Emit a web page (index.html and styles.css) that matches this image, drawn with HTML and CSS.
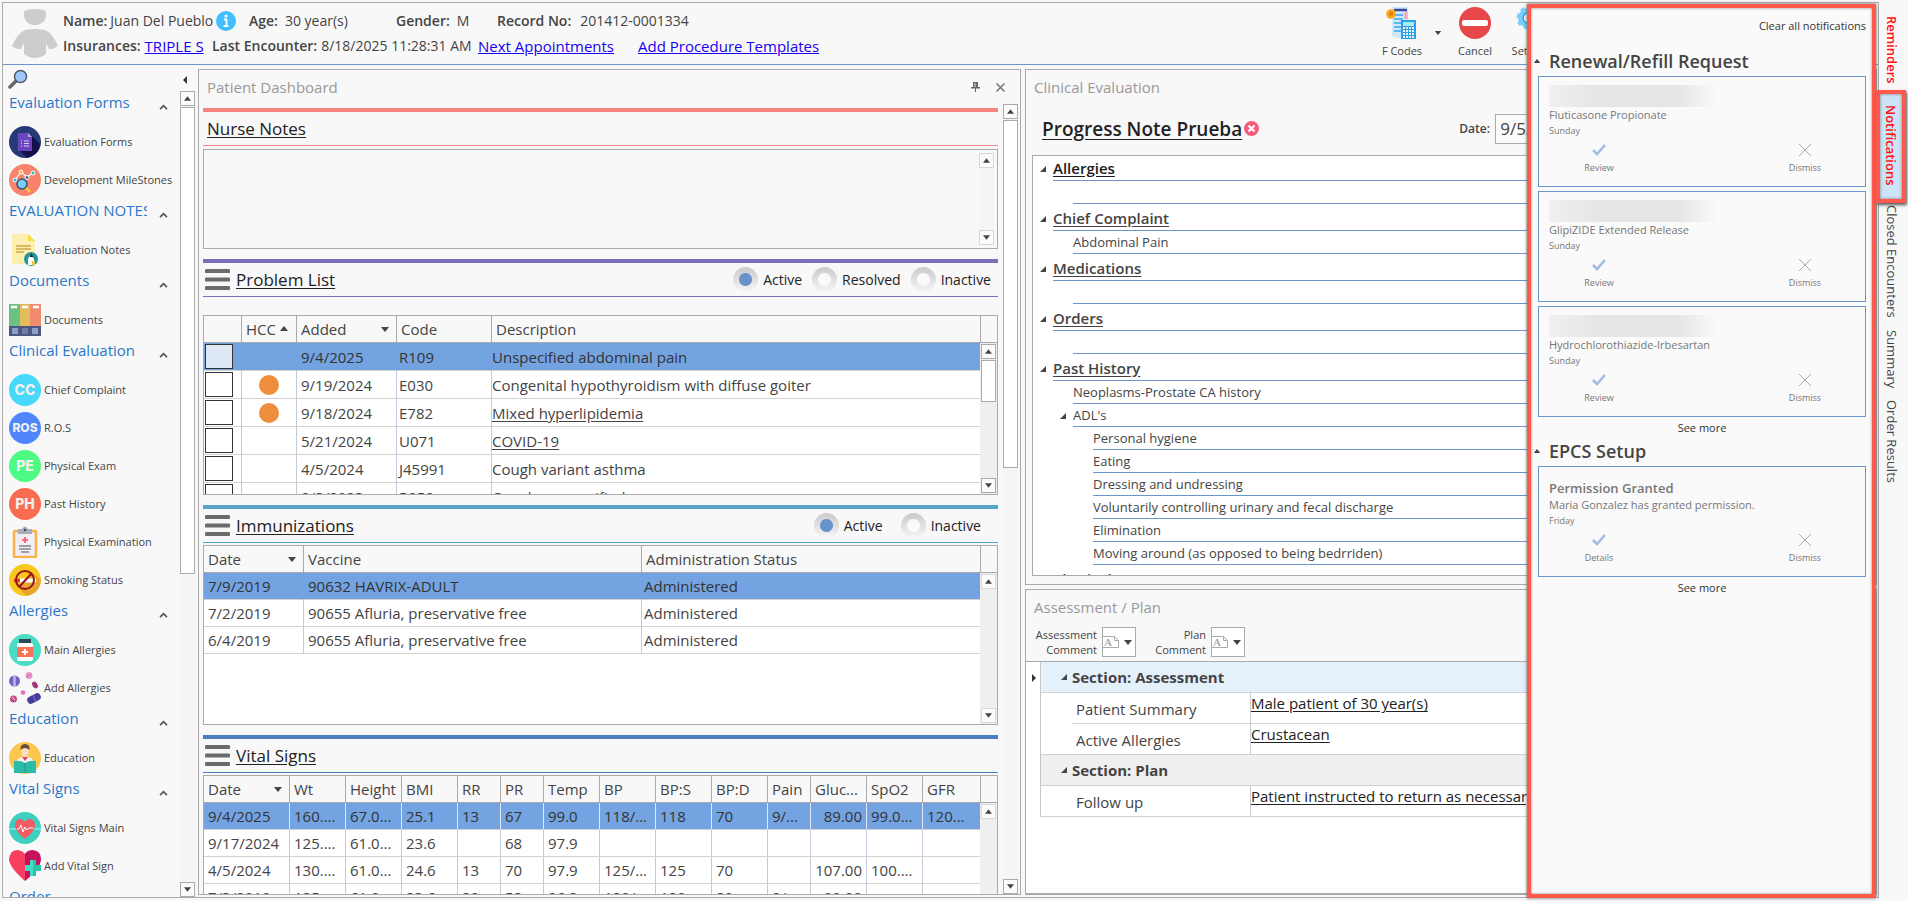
FILE: index.html
```html
<!DOCTYPE html>
<html lang="en">
<head>
<meta charset="utf-8">
<title>Patient Dashboard</title>
<link rel="stylesheet" href="styles.css">
</head>
<body>
<svg class="defs" aria-hidden="true">
  <symbol id="up" viewBox="0 0 8 5"><path d="M0 5L4 0L8 5Z" fill="#444"/></symbol>
  <symbol id="down" viewBox="0 0 8 5"><path d="M0 0L4 5L8 0Z" fill="#444"/></symbol>
  <symbol id="chev" viewBox="0 0 10 7"><path d="M1 6L5 2L9 6" fill="none" stroke="#555" stroke-width="2"/></symbol>
  <symbol id="tri" viewBox="0 0 6 6"><path d="M6 0V6H0Z" fill="#444"/></symbol>
  <symbol id="check" viewBox="0 0 14 12"><path d="M1 6L5 10L13 1" fill="none" stroke="#a3bde0" stroke-width="2.6"/></symbol>
  <symbol id="cross" viewBox="0 0 12 12"><path d="M0 0L12 12M12 0L0 12" fill="none" stroke="#aaa" stroke-width="1"/></symbol>
  <symbol id="burger" viewBox="0 0 25 21"><path d="M1.5 2H23.500M1.500 10.500H23.500M1.500 19H23.500" stroke="#6b6b6b" stroke-width="4" stroke-linecap="round"/></symbol>
  <symbol id="adoc" viewBox="0 0 17 13"><path d="M0 .5H11.500L15.500 4.500V11.500H0" fill="none" stroke="#aaa"/><path d="M11.500 .5V4.500H15.500" fill="none" stroke="#aaa"/><text x="1" y="10" class="serif">A</text></symbol>
</svg>
<div class="app">
  <div class="window">
    <header class="top">
      <svg class="avatar" viewBox="0 0 46 52"><path d="M12 5C12 1 34 1 34 5C35 12 31 18 23 18S11 12 12 5Z" fill="#cdcdcd"/><path d="M13 23Q23 21 33 23Q41 27 46 39Q42 43 37 42L34 36V47Q29 51 23 51T12 47V36L9 42Q4 43 0 39Q5 27 13 23Z" fill="#cdcdcd"/></svg>
      <div class="patient">
        <div class="prow">
          <span class="fld f-name"><b>Name:</b><span>Juan Del Pueblo</span>
            <svg class="info" viewBox="0 0 20 20"><circle cx="10" cy="10" r="10" fill="#3fbffc"/><circle cx="10" cy="5" r="1.600" fill="#fff"/><path d="M8 8.500H10.500V15M7.500 15H12.500" fill="none" stroke="#fff" stroke-width="1.800"/></svg></span>
          <span class="fld f-age"><b>Age:</b><span>30 year(s)</span></span>
          <span class="fld f-gender"><b>Gender:</b><span>M</span></span>
          <span class="fld f-rec"><b>Record No:</b><span>201412-0001334</span></span>
        </div>
        <div class="prow">
          <span class="fld f-ins"><b>Insurances:</b><a href="#">TRIPLE S</a></span>
          <span class="fld f-enc"><b>Last Encounter:</b><span>8/18/2025 11:28:31 AM</span></span>
          <a class="f-next" href="#">Next Appointments</a>
          <a href="#">Add Procedure Templates</a>
        </div>
      </div>
      <div class="tools">
        <button class="tool"><svg viewBox="0 0 32 32"><path d="M6 0H22V30Q14 33 6 29Z" fill="#cfe6fb"/><path d="M8 3H21" stroke="#3c4a9a" stroke-width="2.500"/><path d="M8 8H17M8 12H17M8 16H15M8 20H15M8 24H15" stroke="#5bb6f5" stroke-width="1.800"/><path d="M20 5V12" stroke="#f4a3b8" stroke-width="3"/><circle cx="5" cy="7" r="4.800" fill="#fba919"/><circle cx="5" cy="7" r="2.400" fill="#e8820c"/><rect x="15" y="13" width="15" height="19" fill="#2e9fe6"/><rect x="17" y="15" width="11" height="4" fill="#a6ecf0"/><path d="M17 21H28M17 24H28M17 27H28M17 30H28" stroke="#e7f6ff" stroke-width="2" stroke-dasharray="2 1"/></svg>F Codes</button>
        <button class="drop" aria-label="More F codes"><svg width="8" height="4"><use href="#down"/></svg></button>
        <button class="tool t-cancel"><svg viewBox="0 0 32 32"><circle cx="16" cy="16" r="16" fill="#e8474a"/><rect x="3" y="13" width="26" height="6" rx="2" fill="#fff"/></svg>Cancel</button>
        <button class="tool"><svg viewBox="0 0 32 32"><circle cx="12" cy="11" r="7.500" fill="none" stroke="#76d0fb" stroke-width="5"/><circle cx="12" cy="11" r="10" fill="none" stroke="#76d0fb" stroke-width="3" stroke-dasharray="4 3.850"/><circle cx="12" cy="11" r="5" fill="none" stroke="#3b9fe6" stroke-width="1.500"/></svg>Settings</button>
      </div>
    </header>
    <div class="work">
      <nav class="nav">
        <div class="nav-top">
          <svg width="20" height="20" viewBox="0 0 20 20"><path d="M2 18L8 12" stroke="#666" stroke-width="3.500" stroke-linecap="round"/><circle cx="12.500" cy="7.500" r="6" fill="#9dc8fb" stroke="#4d5866" stroke-width="1.500"/></svg>
          <button class="bare" aria-label="Collapse"><svg width="4" height="8"><path d="M4 0V8L0 4Z" fill="#333"/></svg></button>
        </div>
        <div class="nav-body">
          <div class="nav-list">
            <h2><span>Evaluation Forms</span><svg><use href="#chev"/></svg></h2>
            <a href="#"><svg viewBox="0 0 32 32"><circle cx="16" cy="16" r="16" fill="#263a78"/><path d="M22 9L31 18Q30 29 18 32L10 24Z" fill="#150f4a"/><path d="M9 7H19L23 11V25H9Z" fill="#6a45c0"/><path d="M19 7V11H23Z" fill="#b9a2e8"/><path d="M12 15H13M15 15H20M12 17.500H13M15 17.500H20M12 20H13M15 20H20" stroke="#d8ccf2"/></svg>Evaluation Forms</a>
            <a href="#"><svg viewBox="0 0 32 32"><circle cx="16" cy="16" r="16" fill="#f9826c"/><path d="M6 16L12 8L18 13L24 9" fill="none" stroke="#fff" stroke-width="1.200"/><g stroke="#fff"><circle cx="6" cy="16" r="2" fill="#29b6c8"/><circle cx="12" cy="8" r="2" fill="#f5b62b"/><circle cx="18" cy="13.500" r="2" fill="#2b7a8c"/><circle cx="24" cy="9" r="2" fill="#1fc0b0"/></g><path d="M16 23L21 28" stroke="#f8c33b" stroke-width="2.500"/><circle cx="13" cy="20" r="5" fill="#79cdf9" stroke="#3e5266" stroke-width="1.500"/></svg>Development MileStones</a>
            <h2><span>EVALUATION NOTES</span><svg><use href="#chev"/></svg></h2>
            <a href="#"><svg viewBox="0 0 32 32"><path d="M3 0H19L26 7V30H3Z" fill="#fcefb0"/><path d="M19 0L26 7H19Z" fill="#fbdc3c"/><path d="M7 12H22M7 15H22M7 18H15" stroke="#c8a84a" stroke-width="1.300"/><circle cx="22" cy="25" r="7" fill="#1e9aa0"/><path d="M19 31V25L22 20L25 25V31Z" fill="#fff"/><path d="M21 22L22 19L24 22V23H21Z" fill="#222"/><path d="M23 27H26V31H23Z" fill="#f5c640"/></svg>Evaluation Notes</a>
            <h2><span>Documents</span><svg><use href="#chev"/></svg></h2>
            <a href="#"><svg viewBox="0 0 32 32"><path d="M0 0H11V22H0Z" fill="#6cc082"/><path d="M11 0H21V22H11Z" fill="#e2bb5a"/><path d="M21 0H32V22H21Z" fill="#f18b6e"/><path d="M0 22H32V32H0Z" fill="#4d567c"/><path d="M2 3H8M13 3H19M24 3H30" stroke="#fff" stroke-width="2.500"/><path d="M3 24H9V30H3ZM23 24H29V30H23Z" fill="#8f9dca"/><path d="M13 24H19V30H13Z" fill="#6f7ba3"/></svg>Documents</a>
            <h2><span>Clinical Evaluation</span><svg><use href="#chev"/></svg></h2>
            <a href="#"><i class="disc cc">CC</i>Chief Complaint</a>
            <a href="#"><i class="disc ros">ROS</i>R.O.S</a>
            <a href="#"><i class="disc pe">PE</i>Physical Exam</a>
            <a href="#"><i class="disc ph">PH</i>Past History</a>
            <a href="#"><svg viewBox="0 0 32 32"><rect x="5" y="5" width="22" height="26" rx="1" fill="#eeeef4" stroke="#fbb14a" stroke-width="2.500"/><path d="M9 3H13Q16-2 19 3H23V8H9Z" fill="#a9afb8"/><circle cx="16" cy="4" r="1.300" fill="#445"/><path d="M16 11V17M13 14H19" stroke="#f26d74" stroke-width="2.200"/><path d="M10 20H22M10 23H22M12 26H20" stroke="#555" stroke-width="1.200"/></svg>Physical Examination</a>
            <a href="#"><svg viewBox="0 0 32 32"><circle cx="16" cy="16" r="16" fill="#f8c91c"/><path d="M24 9L32 16Q31 29 17 32L10 24Z" fill="#e9a62e"/><path d="M5 16.500H27" stroke="#fff" stroke-width="4"/><path d="M5 16.500H11" stroke="#e8421c" stroke-width="4"/><circle cx="16" cy="16" r="9" fill="none" stroke="#98131a" stroke-width="2"/><path d="M10 23L23 9" stroke="#98131a" stroke-width="2"/></svg>Smoking Status</a>
            <h2><span>Allergies</span><svg><use href="#chev"/></svg></h2>
            <a href="#"><svg viewBox="0 0 32 32"><circle cx="16" cy="16" r="16" fill="#4bdcc4"/><rect x="10" y="5" width="12" height="4" fill="#2f4656"/><rect x="8" y="9" width="16" height="18" rx="2" fill="#fff"/><rect x="8" y="13" width="16" height="10" fill="#f8735a"/><path d="M16 15V21M13 18H19" stroke="#fff" stroke-width="1.800"/></svg>Main Allergies</a>
            <a href="#"><svg viewBox="0 0 32 32"><circle cx="5.500" cy="9" r="5.500" fill="#6f66c4"/><path d="M5.500 4V14" stroke="#b9b6ee" stroke-width="2.500"/><circle cx="20" cy="3.500" r="3.500" fill="#e695c6"/><path d="M18 5L22 2" stroke="#c766a0"/><ellipse cx="26" cy="13" rx="2.400" ry="3.600" transform="rotate(-35 26 13)" fill="#a5337c"/><circle cx="14" cy="20.500" r="2.300" fill="#e86cba"/><circle cx="4.500" cy="27" r="3.500" fill="#c94c8e"/><path d="M3 25L6 28" stroke="#fff" stroke-width=".8"/><path d="M22 28L28 25" stroke="#463d9b" stroke-width="7.500" stroke-linecap="round"/><path d="M24 23L27 30" stroke="#7e76ce"/></svg>Add Allergies</a>
            <h2><span>Education</span><svg><use href="#chev"/></svg></h2>
            <a href="#"><svg viewBox="0 0 32 32"><circle cx="16" cy="16" r="16" fill="#fbc64c"/><path d="M7 20Q9 15 16 14Q23 15 25 20V26H7Z" fill="#f4f2ee"/><path d="M13 15L16 19L19 15Z" fill="#e5464b"/><ellipse cx="16" cy="9" rx="4" ry="5.500" fill="#fbdcbc"/><path d="M11.500 8Q11 2 16 2T20.500 8Q16 4 11.500 8Z" fill="#6b4a3c"/><path d="M5 19Q11 18 16 21Q21 18 27 19V31H5Z" fill="#2cbba8"/><path d="M16 21V31" stroke="#1e9a8c"/></svg>Education</a>
            <h2><span>Vital Signs</span><svg><use href="#chev"/></svg></h2>
            <a href="#"><svg viewBox="0 0 32 32"><circle cx="16" cy="16" r="16" fill="#3fcfc0"/><path d="M0 17H32" stroke="#b6f0e8"/><path d="M16 27Q5 18 6 12Q7 7 12 7Q15 7.500 16 10Q17 7.500 20 7Q25 7 26 12Q27 18 16 27Z" fill="#f45b62"/><path d="M8 17H10L12 13L14 20L16 15L18 18L20 16H24" fill="none" stroke="#fff"/></svg>Vital Signs Main</a>
            <a href="#"><svg viewBox="0 0 32 32"><path d="M16 31Q0 17 0 9Q1 0 9 0Q14 1 16 4Z" fill="#f83f5f"/><path d="M16 4Q18 0 24 0Q32 1 32 9Q32 18 16 31Z" fill="#c4125f"/><path d="M21 10H27V15H32V21H27V26H21V21H16V15H21Z" fill="#45dcc0"/><path d="M24 10H27V15H32V21H27V26H24Z" fill="#2cc4a8"/></svg>Add Vital Sign</a>
            <h2><span>Order</span><svg><use href="#chev"/></svg></h2>
          </div>
          <div class="scroll dark"><button aria-label="Up"><svg><use href="#up"/></svg></button><div class="thumb t-nav"></div><button class="end" aria-label="Down"><svg><use href="#down"/></svg></button></div>
        </div>
      </nav>

      <main class="panel dash">
        <div class="ptitle"><span>Patient Dashboard</span>
          <button class="bare" aria-label="Pin"><svg width="9" height="10" viewBox="0 0 9 10"><path d="M2 0H7V5H9V6.500H5V10H4V6.500H0V5H2Z" fill="#666"/><path d="M4 1V5" stroke="#ddd"/></svg></button>
          <button class="bare" aria-label="Close"><svg width="9" height="9" viewBox="0 0 9 9"><path d="M.5 .5L8.500 8.500M8.500 .5L.5 8.500" stroke="#777" stroke-width="1.500"/></svg></button>
        </div>
        <div class="dash-body">
          <div class="sections">
            <section class="sec red">
              <div class="sec-head"><h3><label for="nurse">Nurse Notes</label></h3></div>
              <div class="notes"><textarea id="nurse"></textarea>
                <div class="scroll light"><button aria-label="Up"><svg><use href="#up"/></svg></button><button class="end" aria-label="Down"><svg><use href="#down"/></svg></button></div></div>
            </section>
            <section class="sec purple">
              <div class="sec-head"><svg class="burger"><use href="#burger"/></svg><h3>Problem List</h3>
                <div class="radios">
                  <label><input type="radio" name="prob" checked>Active</label>
                  <label><input type="radio" name="prob">Resolved</label>
                  <label><input type="radio" name="prob">Inactive</label>
                </div></div>
              <div class="gridbox problems">
                <table>
                  <colgroup><col class="w38"><col class="w55"><col class="w100"><col class="w95"><col></colgroup>
                  <thead><tr><th></th><th>HCC<svg class="sort s-in"><use href="#up"/></svg></th><th>Added<svg class="sort"><use href="#down"/></svg></th><th>Code</th><th>Description</th></tr></thead>
                  <tbody>
                    <tr class="sel"><td><input type="checkbox" aria-label="R109"></td><td></td><td>9/4/2025</td><td>R109</td><td>Unspecified abdominal pain</td></tr>
                    <tr><td><input type="checkbox" aria-label="E030"></td><td><i class="dot"></i></td><td>9/19/2024</td><td>E030</td><td>Congenital hypothyroidism with diffuse goiter</td></tr>
                    <tr><td><input type="checkbox" aria-label="E782"></td><td><i class="dot"></i></td><td>9/18/2024</td><td>E782</td><td><u>Mixed hyperlipidemia</u></td></tr>
                    <tr><td><input type="checkbox" aria-label="U071"></td><td></td><td>5/21/2024</td><td>U071</td><td><u>COVID-19</u></td></tr>
                    <tr><td><input type="checkbox" aria-label="J45991"></td><td></td><td>4/5/2024</td><td>J45991</td><td>Cough variant asthma</td></tr>
                    <tr><td><input type="checkbox" aria-label="R059"></td><td></td><td>9/8/2023</td><td>R059</td><td>Cough, unspecified</td></tr>
                  </tbody>
                </table>
                <div class="side"><div class="cap"></div><div class="scroll dark"><button aria-label="Up"><svg><use href="#up"/></svg></button><div class="thumb t-prob"></div><button class="end" aria-label="Down"><svg><use href="#down"/></svg></button></div></div>
              </div>
            </section>
            <section class="sec teal">
              <div class="sec-head"><svg class="burger"><use href="#burger"/></svg><h3>Immunizations</h3>
                <div class="radios wide">
                  <label><input type="radio" name="imm" checked>Active</label>
                  <label><input type="radio" name="imm">Inactive</label>
                </div></div>
              <div class="gridbox immun">
                <table>
                  <colgroup><col class="w100"><col class="half"><col class="half"></colgroup>
                  <thead><tr><th>Date<svg class="sort"><use href="#down"/></svg></th><th>Vaccine</th><th>Administration Status</th></tr></thead>
                  <tbody>
                    <tr class="sel"><td>7/9/2019</td><td>90632 HAVRIX-ADULT</td><td>Administered</td></tr>
                    <tr><td>7/2/2019</td><td>90655 Afluria, preservative free</td><td>Administered</td></tr>
                    <tr><td>6/4/2019</td><td>90655 Afluria, preservative free</td><td>Administered</td></tr>
                  </tbody>
                </table>
                <div class="side"><div class="cap"></div><div class="scroll light"><button aria-label="Up"><svg><use href="#up"/></svg></button><button class="end" aria-label="Down"><svg><use href="#down"/></svg></button></div></div>
              </div>
            </section>
            <section class="sec blue">
              <div class="sec-head"><svg class="burger"><use href="#burger"/></svg><h3>Vital Signs</h3></div>
              <div class="gridbox vitals">
                <table>
                  <colgroup><col class="w86"><col class="w56"><col class="w56"><col class="w56"><col class="w43"><col class="w43"><col class="w56"><col class="w56"><col class="w56"><col class="w56"><col class="w43"><col class="w56"><col class="w56"><col></colgroup>
                  <thead><tr><th>Date<svg class="sort"><use href="#down"/></svg></th><th>Wt</th><th>Height</th><th>BMI</th><th>RR</th><th>PR</th><th>Temp</th><th>BP</th><th>BP:S</th><th>BP:D</th><th>Pain</th><th>Gluc...</th><th>SpO2</th><th>GFR</th></tr></thead>
                  <tbody>
                    <tr class="sel"><td>9/4/2025</td><td>160....</td><td>67.0...</td><td>25.1</td><td>13</td><td>67</td><td>99.0</td><td>118/...</td><td>118</td><td>70</td><td>9/...</td><td class="num">89.00</td><td>99.0...</td><td>120...</td></tr>
                    <tr><td>9/17/2024</td><td>125....</td><td>61.0...</td><td>23.6</td><td></td><td>68</td><td>97.9</td><td></td><td></td><td></td><td></td><td></td><td></td><td></td></tr>
                    <tr><td>4/5/2024</td><td>130....</td><td>61.0...</td><td>24.6</td><td>13</td><td>70</td><td>97.9</td><td>125/...</td><td>125</td><td>70</td><td></td><td class="num">107.00</td><td>100....</td><td></td></tr>
                    <tr><td>7/3/2019</td><td>125....</td><td>61.0...</td><td>23.6</td><td>20</td><td>58</td><td>96.2</td><td>120/...</td><td>120</td><td>80</td><td>0/...</td><td class="num">90.00</td><td></td><td></td></tr>
                  </tbody>
                </table>
                <div class="side"><div class="cap"></div><div class="scroll light"><button aria-label="Up"><svg><use href="#up"/></svg></button></div></div>
              </div>
            </section>
          </div>
          <div class="scroll dark outer"><button aria-label="Up"><svg><use href="#up"/></svg></button><div class="thumb t-dash"></div><button class="end" aria-label="Down"><svg><use href="#down"/></svg></button></div>
        </div>
      </main>

      <div class="right">
        <section class="panel clin">
          <div class="ptitle"><span>Clinical Evaluation</span></div>
          <div class="note-head">
            <h1>Progress Note Prueba</h1>
            <svg width="15" height="15" viewBox="0 0 15 15"><circle cx="7.500" cy="7.500" r="7.500" fill="#f65c78"/><path d="M4.500 4.500L10.500 10.500M10.500 4.500L4.500 10.500" stroke="#fff" stroke-width="2.200"/></svg>
            <label for="date">Date:</label><input id="date" type="text" value="9/5/2025">
          </div>
          <div class="tree">
            <div class="grp"><h4 class="ink"><svg><use href="#tri"/></svg><span>Allergies</span></h4><p></p></div>
            <div class="grp"><h4><svg><use href="#tri"/></svg><span>Chief Complaint</span></h4><p>Abdominal Pain</p></div>
            <div class="grp"><h4><svg><use href="#tri"/></svg><span>Medications</span></h4><p></p></div>
            <div class="grp"><h4><svg><use href="#tri"/></svg><span>Orders</span></h4><p></p></div>
            <div class="grp"><h4><svg><use href="#tri"/></svg><span>Past History</span></h4>
              <p>Neoplasms-Prostate CA history</p>
              <p class="open"><svg><use href="#tri"/></svg>ADL's</p>
              <p class="deep">Personal hygiene</p><p class="deep">Eating</p><p class="deep">Dressing and undressing</p><p class="deep">Voluntarily controlling urinary and fecal discharge</p><p class="deep">Elimination</p><p class="deep">Moving around (as opposed to being bedrriden)</p></div>
            <div class="grp"><h4><svg class="off"></svg><span>Physical Exam</span></h4></div>
          </div>
        </section>
        <section class="panel plan">
          <div class="ptitle"><span>Assessment / Plan</span></div>
          <div class="plan-tools">
            <span>Assessment<br>Comment</span><button aria-label="Assessment comment"><svg width="17" height="13"><use href="#adoc"/></svg><svg width="8" height="5"><use href="#down"/></svg></button>
            <span class="second">Plan<br>Comment</span><button aria-label="Plan comment"><svg width="17" height="13"><use href="#adoc"/></svg><svg width="8" height="5"><use href="#down"/></svg></button>
          </div>
          <table class="plan-grid">
            <colgroup><col class="w15"><col class="w31"><col class="w179"><col></colgroup>
            <tr class="sect on"><td><svg width="4" height="8"><path d="M0 0L4 4L0 8Z" fill="#333"/></svg></td><th colspan="3"><svg class="t"><use href="#tri"/></svg>Section: Assessment</th></tr>
            <tr><td></td><td class="ind"></td><td class="lab">Patient Summary</td><td class="val"><u>Male patient of 30 year(s)</u></td></tr>
            <tr><td></td><td class="ind last"></td><td class="lab">Active Allergies</td><td class="val"><u>Crustacean</u></td></tr>
            <tr class="sect"><td></td><th colspan="3"><svg class="t"><use href="#tri"/></svg>Section: Plan</th></tr>
            <tr><td></td><td class="ind last"></td><td class="lab">Follow up</td><td class="val"><u>Patient instructed to return as necessary</u></td></tr>
          </table>
        </section>
      </div>
    </div>
    <aside class="notif">
      <button class="clear">Clear all notifications</button>
      <h2><svg><use href="#up"/></svg>Renewal/Refill Request</h2>
      <article><div class="smudge"></div><p>Fluticasone Propionate</p><small>Sunday</small><div class="acts"><button><svg width="14" height="12"><use href="#check"/></svg>Review</button><button><svg width="12" height="12"><use href="#cross"/></svg>Dismiss</button></div></article>
      <article><div class="smudge"></div><p>GlipiZIDE Extended Release</p><small>Sunday</small><div class="acts"><button><svg width="14" height="12"><use href="#check"/></svg>Review</button><button><svg width="12" height="12"><use href="#cross"/></svg>Dismiss</button></div></article>
      <article><div class="smudge"></div><p>Hydrochlorothiazide-Irbesartan</p><small>Sunday</small><div class="acts"><button><svg width="14" height="12"><use href="#check"/></svg>Review</button><button><svg width="12" height="12"><use href="#cross"/></svg>Dismiss</button></div></article>
      <button class="more">See more</button>
      <h2><svg><use href="#up"/></svg>EPCS Setup</h2>
      <article><h3>Permission Granted</h3><p>Maria Gonzalez has granted permission.</p><small>Friday</small><div class="acts"><button><svg width="14" height="12"><use href="#check"/></svg>Details</button><button><svg width="12" height="12"><use href="#cross"/></svg>Dismiss</button></div></article>
      <button class="more">See more</button>
    </aside>
  </div>
  <div class="tabs">
    <button class="hot">Reminders</button>
    <button class="hot cur">Notifications</button>
    <button>Closed Encounters</button>
    <button>Summary</button>
    <button>Order Results</button>
  </div>
</div>
</body>
</html>
```
FILE: styles.css
```css
* { box-sizing: border-box; }
body { margin: 0; background: #f8f8f8; color: #444; font: 15px/20px "Open Sans", "Noto Sans", sans-serif; overflow: hidden; }
h1, h2, h3, h4, p { margin: 0; font-weight: 400; font-size: inherit; }
button, input, textarea { font: inherit; color: inherit; margin: 0; padding: 0; }
button { background: none; border: 0; }
svg { display: block; flex: none; }
.defs { position: absolute; width: 0; height: 0; }
.serif { font: bold 11px "Liberation Serif", serif; fill: #aaa; }
b { font-weight: 600; }

.app { display: flex; height: 100vh; padding: 2px 0 3px 2px; }
.window { position: relative; flex: 1; min-width: 0; display: flex; flex-direction: column; border: 1px solid #ababab; }

.top { display: flex; height: 62px; flex: none; border-bottom: 1px solid #6b96cb; padding: 4px 0 0 9px; }
.avatar { width: 46px; height: 52px; margin-right: 5px; }
.patient { display: flex; flex-direction: column; gap: 5px; padding-top: 4px; }
.prow { display: flex; white-space: nowrap; }
.prow a { color: #1a00f0; font-size: 15px; }
.fld { display: flex; gap: 4px; font-size: 14px; }
.fld .info { width: 20px; height: 20px; }
.f-name { width: 186px; gap: 3px; }
.f-age { width: 147px; gap: 7px; }
.f-gender { width: 101px; gap: 7px; }
.f-rec { gap: 9px; }
.f-ins { width: 149px; }
.f-enc { width: 266px; }
.f-next { width: 160px; }
.tools { display: flex; margin-left: auto; padding-right: 322px; font-size: 11px; line-height: 15px; }
.tool { display: flex; flex-direction: column; align-items: center; gap: 4px; width: 48px; }
.tool svg { width: 32px; height: 32px; }
.drop { width: 25px; padding: 24px 8px 0; display: flex; align-items: flex-start; }
.t-cancel { margin-right: 9px; }

.work { flex: 1; min-height: 0; display: grid; grid-template-columns: 195px minmax(0, 823fr) minmax(0, 856fr); padding-right: 1px; }

.nav { display: flex; flex-direction: column; min-height: 0; padding-right: 3px; }
.nav-top { display: flex; justify-content: space-between; height: 26px; padding: 4px 8px 0 5px; flex: none; }
.bare { display: flex; align-items: center; }
.nav-body { flex: 1; min-height: 0; display: flex; justify-content: space-between; }
.nav-list { width: 177px; overflow: hidden; padding-left: 6px; }
.nav h2 { display: flex; height: 32px; color: #2b77c9; line-height: 22px; }
.nav h2 span { width: 138px; overflow: hidden; white-space: nowrap; }
.nav h2 svg { width: 9px; height: 6px; margin: 13px 0 0 12px; }
.nav a { display: flex; align-items: center; gap: 3px; height: 38px; color: #444; text-decoration: none; font-size: 11px; white-space: nowrap; }
.nav a svg, .disc { width: 32px; height: 32px; flex: none; }
.disc { border-radius: 50%; font: 800 14px/32px Inter, sans-serif; color: #f0f0f0; text-align: center; }
.cc { background: #47d8fa; }
.ros { background: #4f86fb; font-size: 12px; }
.pe { background: #4dfa83; }
.ph { background: #f96c50; }

.scroll { width: 15px; display: flex; flex-direction: column; gap: 1px; background: #f5f5f5; }
.scroll button { height: 15px; flex: none; background: #fbfbfb; border: 1px solid #aaa; display: flex; align-items: center; justify-content: center; }
.scroll button svg { width: 7px; height: 5px; }
.scroll.light button { border-color: #d8d8d8; }
.end { margin-top: auto; }
.thumb { background: #fff; border: 1px solid #aaa; }
.t-nav { height: 58%; }
.t-dash { height: 44%; }
.t-prob { height: 42px; }

.panel { border: 1px solid #ababab; margin-top: 4px; min-height: 0; }
.ptitle { display: flex; align-items: center; gap: 16px; height: 34px; padding: 0 12px 0 8px; color: #999; flex: none; }
.ptitle span { flex: 1; }
.dash { display: flex; flex-direction: column; margin-bottom: 2px; padding: 0 2px 0 4px; }
.dash .ptitle { padding: 0 13px 0 4px; }
.dash-body { flex: 1; min-height: 0; display: flex; gap: 5px; overflow: hidden; }
.sections { flex: 1; min-width: 0; padding-top: 4px; overflow: hidden; }
.sec { border-top: 4px solid; margin-bottom: 10px; }
.red { border-color: #f6837f; }
.purple { border-color: #7b6fb8; }
.teal { border-color: #57a5c7; }
.blue { border-color: #4b7ec1; }
.sec-head { display: flex; align-items: center; height: 34px; border-bottom: 1px solid; border-color: inherit; margin-bottom: 2px; padding-left: 4px; color: #222; font-size: 14px; }
.sec-head h3 { font-size: 17px; text-decoration: underline; text-underline-offset: 2px; }
.burger { width: 25px; height: 21px; margin: 0 6px 0 -2px; }
.radios { display: flex; margin-left: auto; padding-right: 7px; gap: 10px; }
.radios.wide { padding-right: 17px; gap: 18px; }
.radios label { display: flex; align-items: center; gap: 5px; }
.radios input { appearance: none; width: 25px; height: 25px; border-radius: 50%; background: radial-gradient(circle, #fafafa 6px, transparent 7px), linear-gradient(#cacaca, #f6f6f6); }
.radios input:checked { background: radial-gradient(circle, #6892c9 6px, transparent 7px), linear-gradient(#cacaca, #f6f6f6); }
.notes { display: flex; height: 100px; border: 1px solid #aaa; padding: 3px; margin-top: 3px; }
.notes textarea { flex: 1; border: 0; background: transparent; resize: none; outline: 0; }

.gridbox { display: flex; border: 1px solid #aaa; height: 180px; overflow: hidden; background: #fff; }
.problems { margin-top: 18px; }
.side { width: 17px; flex: none; display: flex; flex-direction: column; background: #efefef; }
.cap { height: 27px; border-left: 1px solid #aaa; border-bottom: 1px solid #aaa; background: #f8f8f8; }
.side .scroll { flex: 1; margin: 1px 1px 1px 1px; background: #efefef; }
table { border-collapse: separate; border-spacing: 0; table-layout: fixed; width: 100%; }
.gridbox table { flex: 1; width: 0; align-self: flex-start; }
.gridbox th, .gridbox td { height: 27px; padding: 0 0 0 4px; text-align: left; font-weight: 400; white-space: nowrap; overflow: hidden; border-right: 1px solid #c0ccd9; border-bottom: 1px solid #d2d2d2; }
.gridbox th { background: #f8f8f8; border-color: #aaa; }
.gridbox tr > :last-child { border-right: 0; }
.problems td { height: 28px; padding-left: 2px; }
.problems td:first-child { padding-left: 1px; }
.problems td:last-child { padding-left: 0; }
.problems td:nth-child(3), .immun td:nth-child(-n+2) { padding-left: 4px; }
.immun td:last-child { padding-left: 2px; }
.vitals .num { text-align: right; padding-right: 4px; }
.sel td { background: #73a3e1; color: #333; }
.problems .sel td, .immun .sel td { border-right-color: #73a3e1; }
.vitals .sel td { border-right-color: #dfe9f6; }
.sort { width: 8px; height: 5px; float: right; margin: 8px 7px 0 0; }
.s-in { float: none; display: inline; margin: 0 0 8px 4px; vertical-align: bottom; }
.problems input { appearance: none; display: block; width: 28px; height: 25px; border: 1px solid #333; background: #fff; }
.problems .sel input { background: #dfe9f6; }
.dot { display: block; width: 20px; height: 20px; border-radius: 50%; background: #ee8e3c; margin-left: 15px; }
.w15 { width: 15px; } .w31 { width: 31px; } .w38 { width: 38px; } .w43 { width: 43px; }
.w55 { width: 55px; } .w56 { width: 56px; } .w86 { width: 86px; } .w95 { width: 95px; }
.w100 { width: 100px; } .w179 { width: 179px; } .half { width: 50%; }

.right { display: grid; grid-template-rows: minmax(0, 519fr) minmax(0, 311fr); min-height: 0; margin-left: 4px; }
.clin { display: flex; flex-direction: column; padding: 0 6px 8px; overflow: hidden; }
.clin .ptitle { padding-left: 2px; }
.note-head { display: flex; align-items: center; height: 51px; padding: 0 0 2px 10px; flex: none; color: #222; }
.note-head h1 { font-size: 19px; font-weight: 600; line-height: 26px; text-decoration: underline; text-underline-offset: 3px; margin-right: 2px; }
.note-head label { font-size: 12px; font-weight: 600; color: #444; margin-left: 200px; width: 36px; }
.note-head input { width: 120px; height: 30px; border: 1px solid #aaa; padding-left: 4px; background: #fbfbfb; font-size: 17px; color: #444; }
.tree { flex: 1; min-height: 0; overflow: hidden; border: 1px solid #aaa; background: #fff; padding-left: 20px; font-size: 13px; }
.grp + .grp { padding-top: 2px; }
.tree h4 { height: 25px; line-height: 23px; border-bottom: 1px solid #6b96cb; font-size: 15px; font-weight: 600; display: flex; align-items: center; }
.tree h4 span { text-decoration: underline; text-underline-offset: 2px; }
.tree h4 svg, .open svg { width: 6px; height: 6px; margin: 2px 7px 0 -13px; }
.tree .ink { color: #1c1c1c; }
.tree p { height: 23px; line-height: 22px; border-bottom: 1px solid #6b96cb; margin-left: 20px; display: flex; align-items: center; }
.tree .deep { margin-left: 40px; }

.plan { margin-bottom: 2px; display: flex; flex-direction: column; border-width: 1px 1px 2px; background: #fff; }
.plan .ptitle, .plan-tools { background: #f8f8f8; }
.plan-tools { display: flex; height: 37px; padding: 3px 0 0 9px; text-align: right; font-size: 11px; line-height: 15px; flex: none; }
.plan-tools span { width: 62px; margin-right: 5px; }
.plan-tools .second { width: 70px; }
.plan-tools button { width: 34px; height: 30px; border: 1px solid #aaa; background: #fff; display: flex; align-items: center; gap: 4px; }
.plan-grid { border-top: 1px solid #aaa; }
.plan-grid td, .plan-grid th { height: 31px; padding: 0; text-align: left; white-space: nowrap; overflow: hidden; border-bottom: 1px solid #d2d2d2; }
.plan-grid td:first-child { border-bottom: 0; border-right: 1px solid #c8c8c8; padding-left: 6px; }
.plan-grid th { background: #efefef; font-weight: 700; }
.plan-grid .on th { background: #e4f1fa; }
.plan-grid .t { display: inline; width: 6px; height: 6px; margin: 0 5px 4px 20px; vertical-align: middle; }
.plan-grid .ind { border-bottom-color: transparent; }
.plan-grid .last { border-bottom-color: #d2d2d2; }
.plan-grid .lab { border-right: 1px solid #c8ccd9; padding: 2px 0 0 4px; }
.plan-grid .val { vertical-align: top; color: #222; }
u { text-underline-offset: 2px; }

.notif { position: absolute; top: 1px; right: 2px; bottom: -1px; width: 349px; border: 4px solid #fe594c; background: #fafafa; box-shadow: 0 0 3px #555, inset 0 0 3px #888; padding: 8px 6px 0 7px; display: flex; flex-direction: column; font-size: 11px; }
.clear, .more { color: #333; font-size: 11px; }
.clear { align-self: flex-end; line-height: 20px; }
.notif h2 { display: flex; align-items: center; gap: 8px; height: 30px; font-size: 18px; font-weight: 600; margin-left: -5px; line-height: 28px; }
.clear + h2 { margin: 10px 0 0 -5px; }
.notif h2 svg { width: 8px; height: 4px; }
.notif article { height: 111px; border: 1px solid #6b96cb; margin-bottom: 4px; padding: 8px 10px; color: #777; flex: none; line-height: 16px; }
.smudge { width: 170px; height: 22px; background: linear-gradient(90deg, #f0f0f0, #e4e5e5 30%, #e4e5e5 75%, #fafafa); }
.notif h3 { font-weight: 600; font-size: 13px; line-height: 18px; padding-top: 4px; }
.notif small { display: block; font-size: 9px; margin-top: 1px; line-height: 14px; }
.acts { display: flex; justify-content: space-between; padding: 6px 22px 0; font-size: 9px; line-height: 14px; }
.acts button { width: 56px; display: flex; flex-direction: column; align-items: center; gap: 5px; }
.more { line-height: 14px; align-self: center; margin-bottom: 1px; }

.tabs { width: 29px; flex: none; display: flex; flex-direction: column; align-items: stretch; padding-top: 4px; font-size: 13px; }
.tabs button { writing-mode: vertical-rl; padding: 0 4px 0 0; margin-bottom: 12px; white-space: nowrap; text-align: left; line-height: 20px; }
.tabs .hot { color: #f11; font-weight: 600; height: 84px; padding-top: 10px; margin-bottom: 0; }
.tabs .cur { position: relative; height: 113px; margin: 0 0 2px -3px; width: 30px; border: 4px solid #fe594c; background: #cce4f7; box-shadow: 1px 2px 3px #555, inset 0 0 3px #777; padding: 11px 0 0 0; }
```
